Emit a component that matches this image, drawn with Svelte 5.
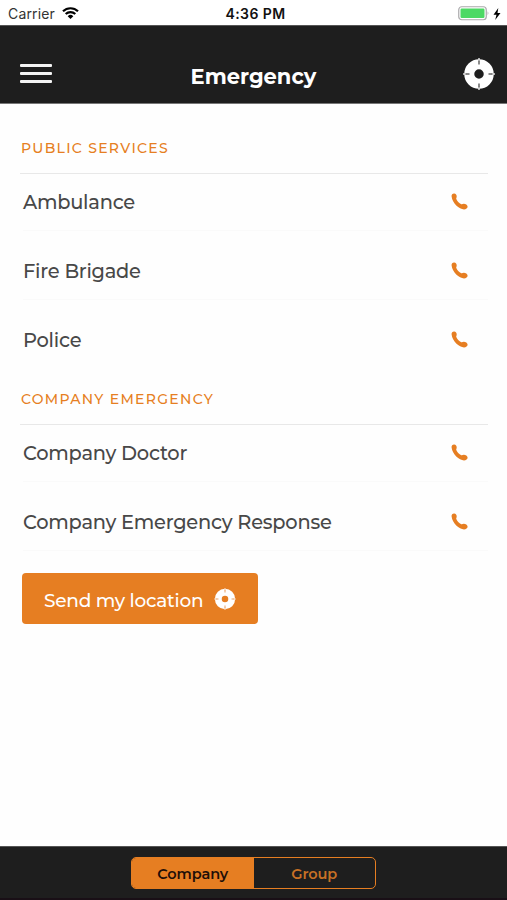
<script lang="ts">
	interface Section {
		title: string;
		contacts: string[];
	}

	const sections: Section[] = [
		{ title: 'Public services', contacts: ['Ambulance', 'Fire Brigade', 'Police'] },
		{ title: 'Company emergency', contacts: ['Company Doctor', 'Company Emergency Response'] }
	];

	const tabs = ['Company', 'Group'];
	let activeTab = $state('Company');
</script>

{#snippet target(className: string)}
	<svg class={className} viewBox="0 0 32 32" aria-hidden="true">
		<circle cx="16" cy="16" r="9.75" fill="none" stroke="#fff" stroke-width="10" />
		<path class="target-outer" d="M16 0v4M16 28v4M0 16h4M28 16h4" />
		<path class="target-inner" d="M16 2.5v4M16 25.5v4M2.5 16h4M25.5 16h4" />
	</svg>
{/snippet}

<div class="screen">
	<div class="status-bar">
		<div class="status-left">
			<span class="carrier">Carrier</span>
			<svg class="wifi" viewBox="0 0 17 12" aria-hidden="true">
				<path d="M1 4.3a10.8 10.8 0 0 1 15 0M3.7 7a7 7 0 0 1 9.6 0" />
				<path class="wifi-dot" d="M8.5 12 5.7 9.2a4 4 0 0 1 5.6 0Z" />
			</svg>
		</div>
		<span class="time">4:36 PM</span>
		<div class="status-right">
			<svg class="battery" viewBox="0 0 32 15" aria-hidden="true">
				<rect x="0.75" y="0.75" width="27.5" height="13" rx="3" fill="#fff" stroke="#aaa9ab" stroke-width="1.2" />
				<rect x="2.5" y="2.5" width="24" height="9.5" rx="1.2" fill="#4cd964" />
				<path d="M29.7 5.2q1.6 2.1 0 4.2Z" fill="#999" />
			</svg>
			<svg class="bolt" viewBox="0 0 8 12" aria-hidden="true">
				<path d="M5.3 0 0.5 6.7h3L2.2 12l5.3-7h-3Z" />
			</svg>
		</div>
	</div>

	<header class="nav-bar">
		<button class="menu" aria-label="Menu">
			<span></span>
			<span></span>
			<span></span>
		</button>
		<h1>Emergency</h1>
		<button class="locate" aria-label="Locate">
			{@render target('target')}
		</button>
	</header>

	<main>
		{#each sections as section}
			<section>
				<h2>{section.title}</h2>
				<ul>
					{#each section.contacts as contact}
						<li>
							<span>{contact}</span>
							<svg class="phone" viewBox="0 0 17 17" aria-hidden="true">
								<path
									d="M0.6 3.5C0.3 1.6 1.7 0.4 3.2 0.5c1.5 0.1 2.7 1.7 2.5 3.2-0.1 0.9-0.7 1.5-0.4 2.3 0.7 1.9 2.8 4.2 5 5.2 0.9 0.4 1.5-0.4 2.5-0.4 1.8 0 3.7 1.2 3.8 2.7 0.1 1.6-1.7 2.9-3.6 2.9C8.2 16.4 1.3 10 0.6 3.5Z"
								/>
							</svg>
						</li>
					{/each}
				</ul>
			</section>
		{/each}

		<button class="send">
			<span>Send my location</span>
			{@render target('target target--small')}
		</button>
	</main>

	<footer>
		<div class="segmented">
			{#each tabs as tab}
				<button class:active={activeTab === tab} onclick={() => (activeTab = tab)}>{tab}</button>
			{/each}
		</div>
	</footer>
</div>

<style>
	:global(body) {
		background: #fff;
	}

	.screen {
		--orange: #e67e22;
		--dark: #1e1e1e;
		display: flex;
		flex-direction: column;
		height: 900px;
		box-sizing: border-box;
		overflow: hidden;
		background: #fefefe;
		font-family: Montserrat, Inter, sans-serif;
	}

	button {
		padding: 0;
		border: 0;
		background: none;
		font: inherit;
		cursor: pointer;
	}

	.status-bar {
		display: grid;
		grid-template-columns: 1fr auto 1fr;
		align-items: center;
		height: 25px;
		padding: 2px 6px 0 8px;
		box-sizing: border-box;
		background: #fff;
		color: #111;
		font-family: Inter, sans-serif;
		font-size: 14px;
	}

	.status-left,
	.status-right {
		display: flex;
		align-items: center;
	}

	.status-left {
		gap: 7px;
	}

	.carrier {
		color: #333;
		letter-spacing: 0.15px;
	}

	.status-right {
		justify-content: flex-end;
		gap: 3px;
	}

	.time {
		padding-left: 2px;
		font-weight: 600;
		letter-spacing: 0.4px;
	}

	.wifi {
		width: 17px;
		height: 12px;
		margin-top: -2px;
		fill: none;
		stroke: #000;
		stroke-width: 2.2;
	}

	.wifi-dot {
		fill: #000;
		stroke: none;
	}

	.battery {
		width: 32px;
		height: 15px;
	}

	.bolt {
		width: 8px;
		height: 12px;
	}

	.nav-bar {
		display: grid;
		grid-template-columns: 1fr auto 1fr;
		align-items: center;
		height: 79px;
		padding: 18px 12px 0 20px;
		box-sizing: border-box;
		border-top: 1px solid #555;
		border-bottom: 1px solid #777;
		background: var(--dark);
	}

	.menu {
		display: flex;
		flex-direction: column;
		gap: 5px;
		width: 32px;
	}

	.menu span {
		height: 2.7px;
		border-radius: 1px;
		background: #f4f4f4;
	}

	h1 {
		margin: 6px 8px 0 0;
		color: #fff;
		font-size: 21px;
		font-weight: 700;
		line-height: 26px;
	}

	.locate {
		justify-self: end;
		height: 32px;
	}

	.target {
		display: block;
		width: 32px;
		height: 32px;
		fill: none;
	}

	.target-outer {
		stroke: #ddd;
		stroke-width: 1.5;
	}

	.target-inner {
		stroke: #666;
		stroke-width: 1.5;
	}

	.target--small {
		width: 22px;
		height: 22px;
	}

	.target--small .target-outer {
		stroke: #f6d5b8;
	}

	.target--small .target-inner {
		stroke: #eaa46a;
	}

	main {
		flex: 1;
		padding: 20px 19px 0 20px;
	}

	h2 {
		height: 50px;
		margin: 0;
		padding-left: 1px;
		box-sizing: border-box;
		border-bottom: 1px solid #e8e8e8;
		color: var(--orange);
		font-size: 14px;
		font-weight: 550;
		line-height: 49px;
		letter-spacing: 1.3px;
		text-transform: uppercase;
	}

	ul {
		display: flex;
		flex-direction: column;
		gap: 12px;
		margin: 0;
		padding: 0 0 0 3px;
		list-style: none;
	}

	section:first-child ul {
		padding-bottom: 6px;
	}

	li {
		display: flex;
		align-items: center;
		justify-content: space-between;
		height: 57px;
		padding: 0 20px 0 0;
		box-sizing: border-box;
		border-bottom: 1px solid #fafafa;
		color: #484848;
		font-size: 19.4px;
		font-weight: 500;
		letter-spacing: -0.23px;
	}

	section:first-child li:last-child {
		border-bottom-color: transparent;
	}

	.phone {
		width: 17px;
		height: 17px;
		margin-top: -2px;
		fill: var(--orange);
	}

	.send {
		display: flex;
		align-items: center;
		gap: 11px;
		width: 236px;
		height: 51px;
		margin: 22px 0 0 2px;
		padding-left: 22px;
		border-radius: 4px;
		background: var(--orange);
		color: #fff;
		font-size: 18.5px;
		font-weight: 500;
		letter-spacing: -0.25px;
	}

	.send span {
		padding-top: 3px;
	}

	footer {
		display: flex;
		align-items: center;
		justify-content: center;
		height: 54px;
		box-sizing: border-box;
		border-top: 1px solid #555;
		border-bottom: 2px solid #190f16;
		background: var(--dark);
	}

	.segmented {
		display: grid;
		grid-template-columns: 1fr 1fr;
		width: 245px;
		height: 32px;
		box-sizing: border-box;
		border: 1px solid var(--orange);
		border-radius: 5px;
		overflow: hidden;
	}

	.segmented button {
		padding-top: 2px;
		color: #c87125;
		font-size: 14.5px;
		font-weight: 600;
		letter-spacing: -0.1px;
	}

	.segmented .active {
		background: var(--orange);
		color: #1e0f08;
	}
</style>
